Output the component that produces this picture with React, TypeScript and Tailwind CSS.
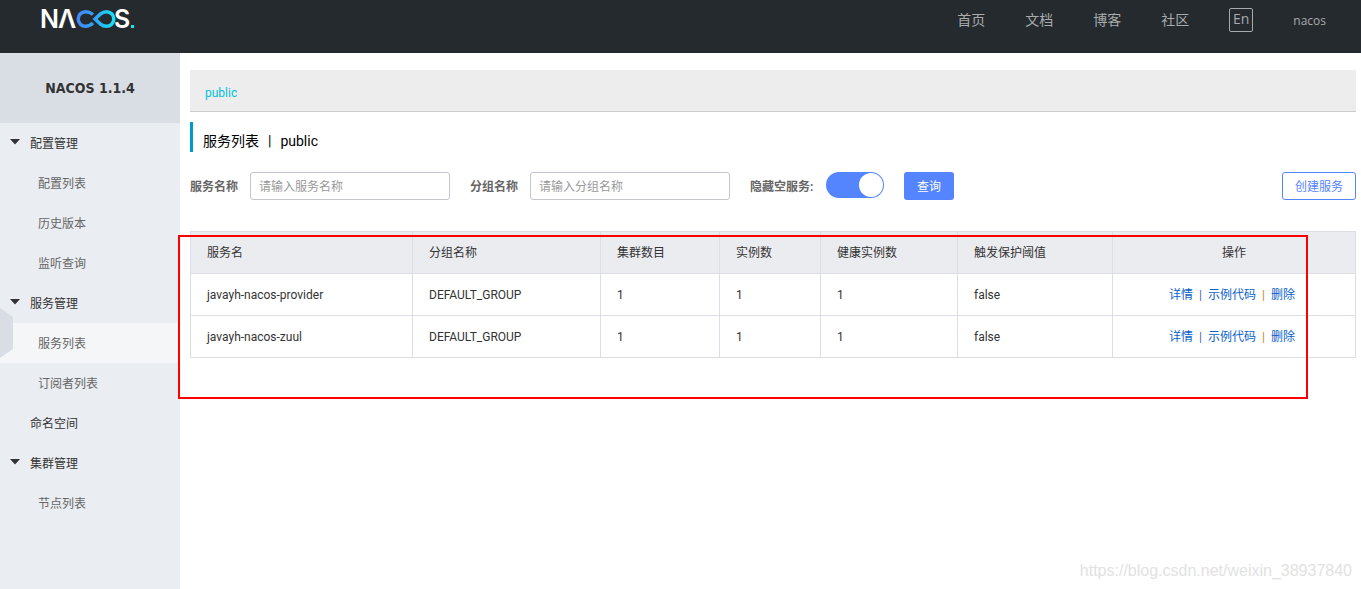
import React from "react";

type MenuItem = { label: string; level: "group" | "leaf" | "child"; active?: boolean };

const menu: MenuItem[] = [
  { label: "配置管理", level: "group" },
  { label: "配置列表", level: "child" },
  { label: "历史版本", level: "child" },
  { label: "监听查询", level: "child" },
  { label: "服务管理", level: "group" },
  { label: "服务列表", level: "child", active: true },
  { label: "订阅者列表", level: "child" },
  { label: "命名空间", level: "leaf" },
  { label: "集群管理", level: "group" },
  { label: "节点列表", level: "child" },
];

const services = [
  { name: "javayh-nacos-provider", group: "DEFAULT_GROUP", clusters: 1, instances: 1, healthy: 1, protect: "false" },
  { name: "javayh-nacos-zuul", group: "DEFAULT_GROUP", clusters: 1, instances: 1, healthy: 1, protect: "false" },
];

const columns = [
  { title: "服务名", width: "w-[222px]" },
  { title: "分组名称", width: "w-[188px]" },
  { title: "集群数目", width: "w-[119px]" },
  { title: "实例数", width: "w-[101px]" },
  { title: "健康实例数", width: "w-[137px]" },
  { title: "触发保护阈值", width: "w-[155px]" },
];

function Logo() {
  return (
    <svg width="98" height="34" viewBox="-4 -7 98 34" role="img" aria-label="NACOS">
      <defs>
        <linearGradient id="loop" gradientUnits="userSpaceOnUse" x1="35" y1="0" x2="74" y2="0">
          <stop offset="0" stopColor="#4485fb" />
          <stop offset="0.5" stopColor="#2fa5f5" />
          <stop offset="1" stopColor="#18e4f0" />
        </linearGradient>
      </defs>
      <g fill="#fff" fontFamily="Inter, sans-serif" fontSize="25" fontWeight="600">
        <text x="-1" y="19">N</text>
        <text x="17" y="19">Λ</text>
        <text x="73" y="19">S</text>
      </g>
      <g fill="none" stroke="url(#loop)" strokeWidth="3.500">
        <path d="M52 5.500 C49.500 3.500 47 2.700 44.500 2.700 A7.300 7.300 0 0 0 44.500 17.300 C47.500 17.300 49.500 16.300 52 14" />
        <path d="M54 10 L59.500 4.900 C61.500 3.200 63.500 2.700 65.500 2.700 A7.300 7.300 0 0 1 65.500 17.300 C63.500 17.300 61.500 16.800 59.500 15.100 Z" />
      </g>
      <rect x="90" y="16" width="3" height="3" fill="#18e4f0" />
    </svg>
  );
}

function Header() {
  return (
    <header className="flex h-[53px] items-start justify-between bg-[#252a2f] pr-[35px] pl-[37px]">
      <a href="#" className="pt-0.5">
        <Logo />
      </a>
      <nav className="flex h-10 items-center gap-10 font-['Open_Sans','Noto_Sans_CJK_SC',sans-serif] text-sm text-[#a8aaac]">
        <a href="#">首页</a>
        <a href="#">文档</a>
        <a href="#">博客</a>
        <a href="#">社区</a>
        <button
          type="button"
          className="flex size-6 items-center justify-center rounded-xs border border-[#a8aaac] pb-0.5 leading-5 font-medium"
        >
          En
        </button>
        <a href="#" className="pt-0.5 text-xs">
          nacos
        </a>
      </nav>
    </header>
  );
}

function Sidebar() {
  return (
    <aside className="w-[180px] shrink-0 bg-[#eaedf1] text-xs">
      <h1 className="flex h-[70px] items-center justify-center bg-[#d9dde4] font-['DejaVu_Sans_Condensed','DejaVu_Sans',sans-serif] text-sm font-bold text-[#333]">
        NACOS 1.1.4
      </h1>
      <ul>
        {menu.map((item) => (
          <li key={item.label} className={item.active ? "relative bg-[#f4f6f8]" : ""}>
            {item.active && (
              <svg className="absolute -top-[15px] left-0" width="13" height="50" viewBox="0 0 13 50" aria-hidden="true">
                <path d="M0 0 L13 9 V41 L0 50 Z" fill="#d9dde4" />
              </svg>
            )}
            <a
              href="#"
              className={
                item.level === "child"
                  ? "flex h-10 items-center pt-0.5 pl-[38px] text-[#666]"
                  : "relative flex h-10 items-center pt-0.5 pl-[30px] text-[#333]"
              }
            >
              {item.level === "group" && (
                <svg className="absolute top-4 left-2.5" width="10" height="6" viewBox="0 0 10 6" aria-hidden="true">
                  <path d="M0 0 H10 L5 5.500 Z" fill="#333" />
                </svg>
              )}
              {item.label}
            </a>
          </li>
        ))}
      </ul>
    </aside>
  );
}

function Filters() {
  const field =
    "h-7 w-[200px] rounded-[3px] border border-[#c4c6cf] bg-white px-2 pt-0.5 text-[#333] placeholder:text-[#999]";
  const label = "pt-0.5 font-bold text-[#666]";
  return (
    <form className="mt-5 flex items-center text-xs">
      <label htmlFor="service" className={`mr-3 ${label}`}>
        服务名称
      </label>
      <input id="service" className={field} placeholder="请输入服务名称" />
      <label htmlFor="group" className={`mr-3 ml-5 ${label}`}>
        分组名称
      </label>
      <input id="group" className={field} placeholder="请输入分组名称" />
      <label htmlFor="hide-empty" className={`ml-5 w-[76px] ${label}`}>
        隐藏空服务:
      </label>
      <input
        id="hide-empty"
        type="checkbox"
        role="switch"
        defaultChecked
        className="mb-0.5 flex h-[26px] w-[58px] appearance-none justify-start rounded-full bg-[#5584ff] p-px before:size-6 before:rounded-full before:bg-white checked:justify-end"
      />
      <button type="button" className="ml-5 h-7 w-[50px] rounded-[3px] bg-[#5584ff] pt-0.5 text-white">
        查询
      </button>
      <button
        type="button"
        className="ml-auto h-7 rounded-[3px] border border-[#5584ff] bg-white px-3 pt-0.5 text-[#5584ff]"
      >
        创建服务
      </button>
    </form>
  );
}

function ServiceTable() {
  const cell = "h-[42px] border border-[#dcdee3] px-4";
  return (
    <div className="relative mt-[31px]">
      <table className="w-full table-fixed border-collapse text-left text-xs text-[#333]">
        <thead className="bg-[#ebecf0]">
          <tr>
            {columns.map((c) => (
              <th key={c.title} className={`${cell} ${c.width} font-normal`}>
                {c.title}
              </th>
            ))}
            <th className={`${cell} text-center font-normal`}>操作</th>
          </tr>
        </thead>
        <tbody>
          {services.map((s) => (
            <tr key={s.name}>
              <td className={cell}>{s.name}</td>
              <td className={cell}>{s.group}</td>
              <td className={cell}>{s.clusters}</td>
              <td className={cell}>{s.instances}</td>
              <td className={cell}>{s.healthy}</td>
              <td className={cell}>{s.protect}</td>
              <td className={cell}>
                <div className="flex justify-center gap-1.5 pr-1 text-[#0a5fcb]">
                  <a href="#">详情</a>
                  <span className="text-[#5560a8]">|</span>
                  <a href="#">示例代码</a>
                  <span className="text-[#c8862a]">|</span>
                  <a href="#">删除</a>
                </div>
              </td>
            </tr>
          ))}
        </tbody>
      </table>
      <div className="pointer-events-none absolute top-1 right-12 -left-3 h-[164px] border-2 border-[#f00]" />
    </div>
  );
}

export default function App() {
  return (
    <div className="relative flex min-h-screen flex-col bg-white font-['Roboto','Noto_Sans_CJK_SC',sans-serif]">
      <Header />
      <div className="flex grow">
        <Sidebar />
        <main className="min-w-0 grow pt-[17px] pr-[5px] pl-2.5">
          <div className="flex h-[42px] items-center border-b border-[#ccc] bg-[#ededed] px-[15px] pt-1 text-xs text-[#00c1de]">
            <a href="#">public</a>
          </div>
          <h2 className="mt-2.5 flex h-[30px] items-center gap-[9px] border-l-3 border-[#09c] pt-2 pl-2.5 text-sm text-black">
            <span>服务列表</span>
            <span>|</span>
            <span>public</span>
          </h2>
          <Filters />
          <ServiceTable />
        </main>
      </div>
      <p className="pointer-events-none absolute right-[9px] bottom-1.5 font-['Liberation_Sans',sans-serif] text-base text-[#e2e2e2]">
        https://blog.csdn.net/weixin_38937840
      </p>
    </div>
  );
}
